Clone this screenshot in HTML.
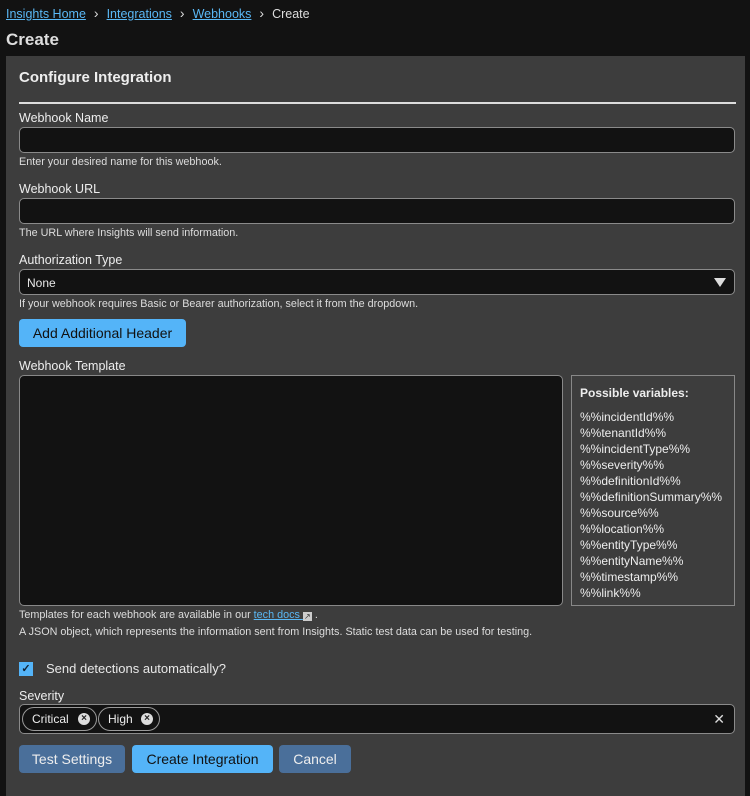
<!DOCTYPE html>
<html><head><style>
*{box-sizing:border-box;margin:0;padding:0}
body{width:750px;height:786px;background:#121212;font-family:"Liberation Sans",sans-serif;color:#e8e8e8;position:relative;overflow:hidden}
.a{position:absolute;white-space:nowrap}
.bc{top:5px;left:6px;font-size:12.5px;color:#ddd}
.bc a{color:#5ab8f5;text-decoration:underline}
.bc .s{margin:0 8px;font-size:14px}
.panel{position:absolute;left:6px;top:56px;width:739px;height:740px;background:#3d3d3d}
.lbl{font-size:12.5px;color:#eee;left:19px}
.help{font-size:10.8px;color:#ddd;left:19px}
.inp{position:absolute;left:19px;width:716px;height:26px;background:#121212;border:1px solid #8a8a8a;border-radius:5px}
.btn{position:absolute;height:28px;border-radius:4px;font-size:14px;text-align:center;line-height:28px}
.vars{position:absolute;left:571px;top:375px;width:164px;height:231px;border:1px solid #888;padding:9px 8px;font-size:12px;color:#eee;line-height:16px}
.chip{position:absolute;top:707px;height:24px;border:1px solid #999;border-radius:12px;font-size:12px;line-height:22px;padding-left:9px;color:#eee}
.x{position:absolute;top:5px;width:12px;height:12px;border-radius:50%;background:#ddd;color:#222;font-size:10px;line-height:12px;text-align:center;font-weight:bold}
</style></head><body>
<div class="a bc"><a>Insights Home</a><span class="s">›</span><a>Integrations</a><span class="s">›</span><a>Webhooks</a><span class="s">›</span>Create</div>
<div class="a" style="top:30px;left:6px;font-size:17px;font-weight:bold;color:#ddd">Create</div>
<div class="panel"></div>
<div class="a" style="top:69px;left:19px;font-size:15px;font-weight:bold;color:#eee">Configure Integration</div>
<div class="a" style="top:102px;left:19px;width:717px;height:2px;background:#ddd"></div>
<div class="a lbl" style="top:111px">Webhook Name</div>
<div class="inp" style="top:127px"></div>
<div class="a help" style="top:156px">Enter your desired name for this webhook.</div>
<div class="a lbl" style="top:182px">Webhook URL</div>
<div class="inp" style="top:198px"></div>
<div class="a help" style="top:227px">The URL where Insights will send information.</div>
<div class="a lbl" style="top:253px">Authorization Type</div>
<div class="inp" style="top:269px"><span class="a" style="left:7px;top:6px;font-size:12px">None</span><span class="a" style="right:8px;top:8px;width:0;height:0;border-left:6px solid transparent;border-right:6px solid transparent;border-top:9px solid #ddd"></span></div>
<div class="a help" style="top:298px">If your webhook requires Basic or Bearer authorization, select it from the dropdown.</div>
<div class="btn" style="left:19px;top:319px;width:167px;background:#54b4f8;color:#111">Add Additional Header</div>
<div class="a lbl" style="top:359px">Webhook Template</div>
<div class="a" style="left:19px;top:375px;width:544px;height:231px;background:#121212;border:1px solid #888;border-radius:5px"></div>
<div class="vars"><div style="font-weight:bold;font-size:12px;margin-bottom:8px">Possible variables:</div>%%incidentId%%<br>%%tenantId%%<br>%%incidentType%%<br>%%severity%%<br>%%definitionId%%<br>%%definitionSummary%%<br>%%source%%<br>%%location%%<br>%%entityType%%<br>%%entityName%%<br>%%timestamp%%<br>%%link%%</div>
<div class="a help" style="top:609px">Templates for each webhook are available in our <span style="color:#5ab8f5;text-decoration:underline">tech docs </span><span style="display:inline-block;width:9px;height:9px;background:#ccc;color:#333;font-size:8px;line-height:9px;text-align:center;vertical-align:-1px">↗</span> .</div>
<div class="a help" style="top:626px">A JSON object, which represents the information sent from Insights. Static test data can be used for testing.</div>
<div class="a" style="left:19px;top:662px;width:14px;height:14px;background:#54b4f8;color:#123;font-size:11px;line-height:14px;text-align:center;font-weight:bold">✓</div>
<div class="a" style="left:46px;top:661px;font-size:13px">Send detections automatically?</div>
<div class="a lbl" style="top:689px;font-size:12.5px">Severity</div>
<div class="inp" style="top:704px;height:30px"><span class="a" style="right:9px;top:6px;font-size:14px;color:#ddd">✕</span></div>
<div class="chip" style="left:22px;width:75px">Critical<span class="x" style="left:55px">×</span></div>
<div class="chip" style="left:98px;width:62px">High<span class="x" style="left:42px">×</span></div>
<div class="btn" style="left:19px;top:745px;width:106px;background:#4a6f9a;color:#eee">Test Settings</div>
<div class="btn" style="left:132px;top:745px;width:141px;background:#54b4f8;color:#111">Create Integration</div>
<div class="btn" style="left:279px;top:745px;width:72px;background:#4a6f9a;color:#eee">Cancel</div>
</body></html>
